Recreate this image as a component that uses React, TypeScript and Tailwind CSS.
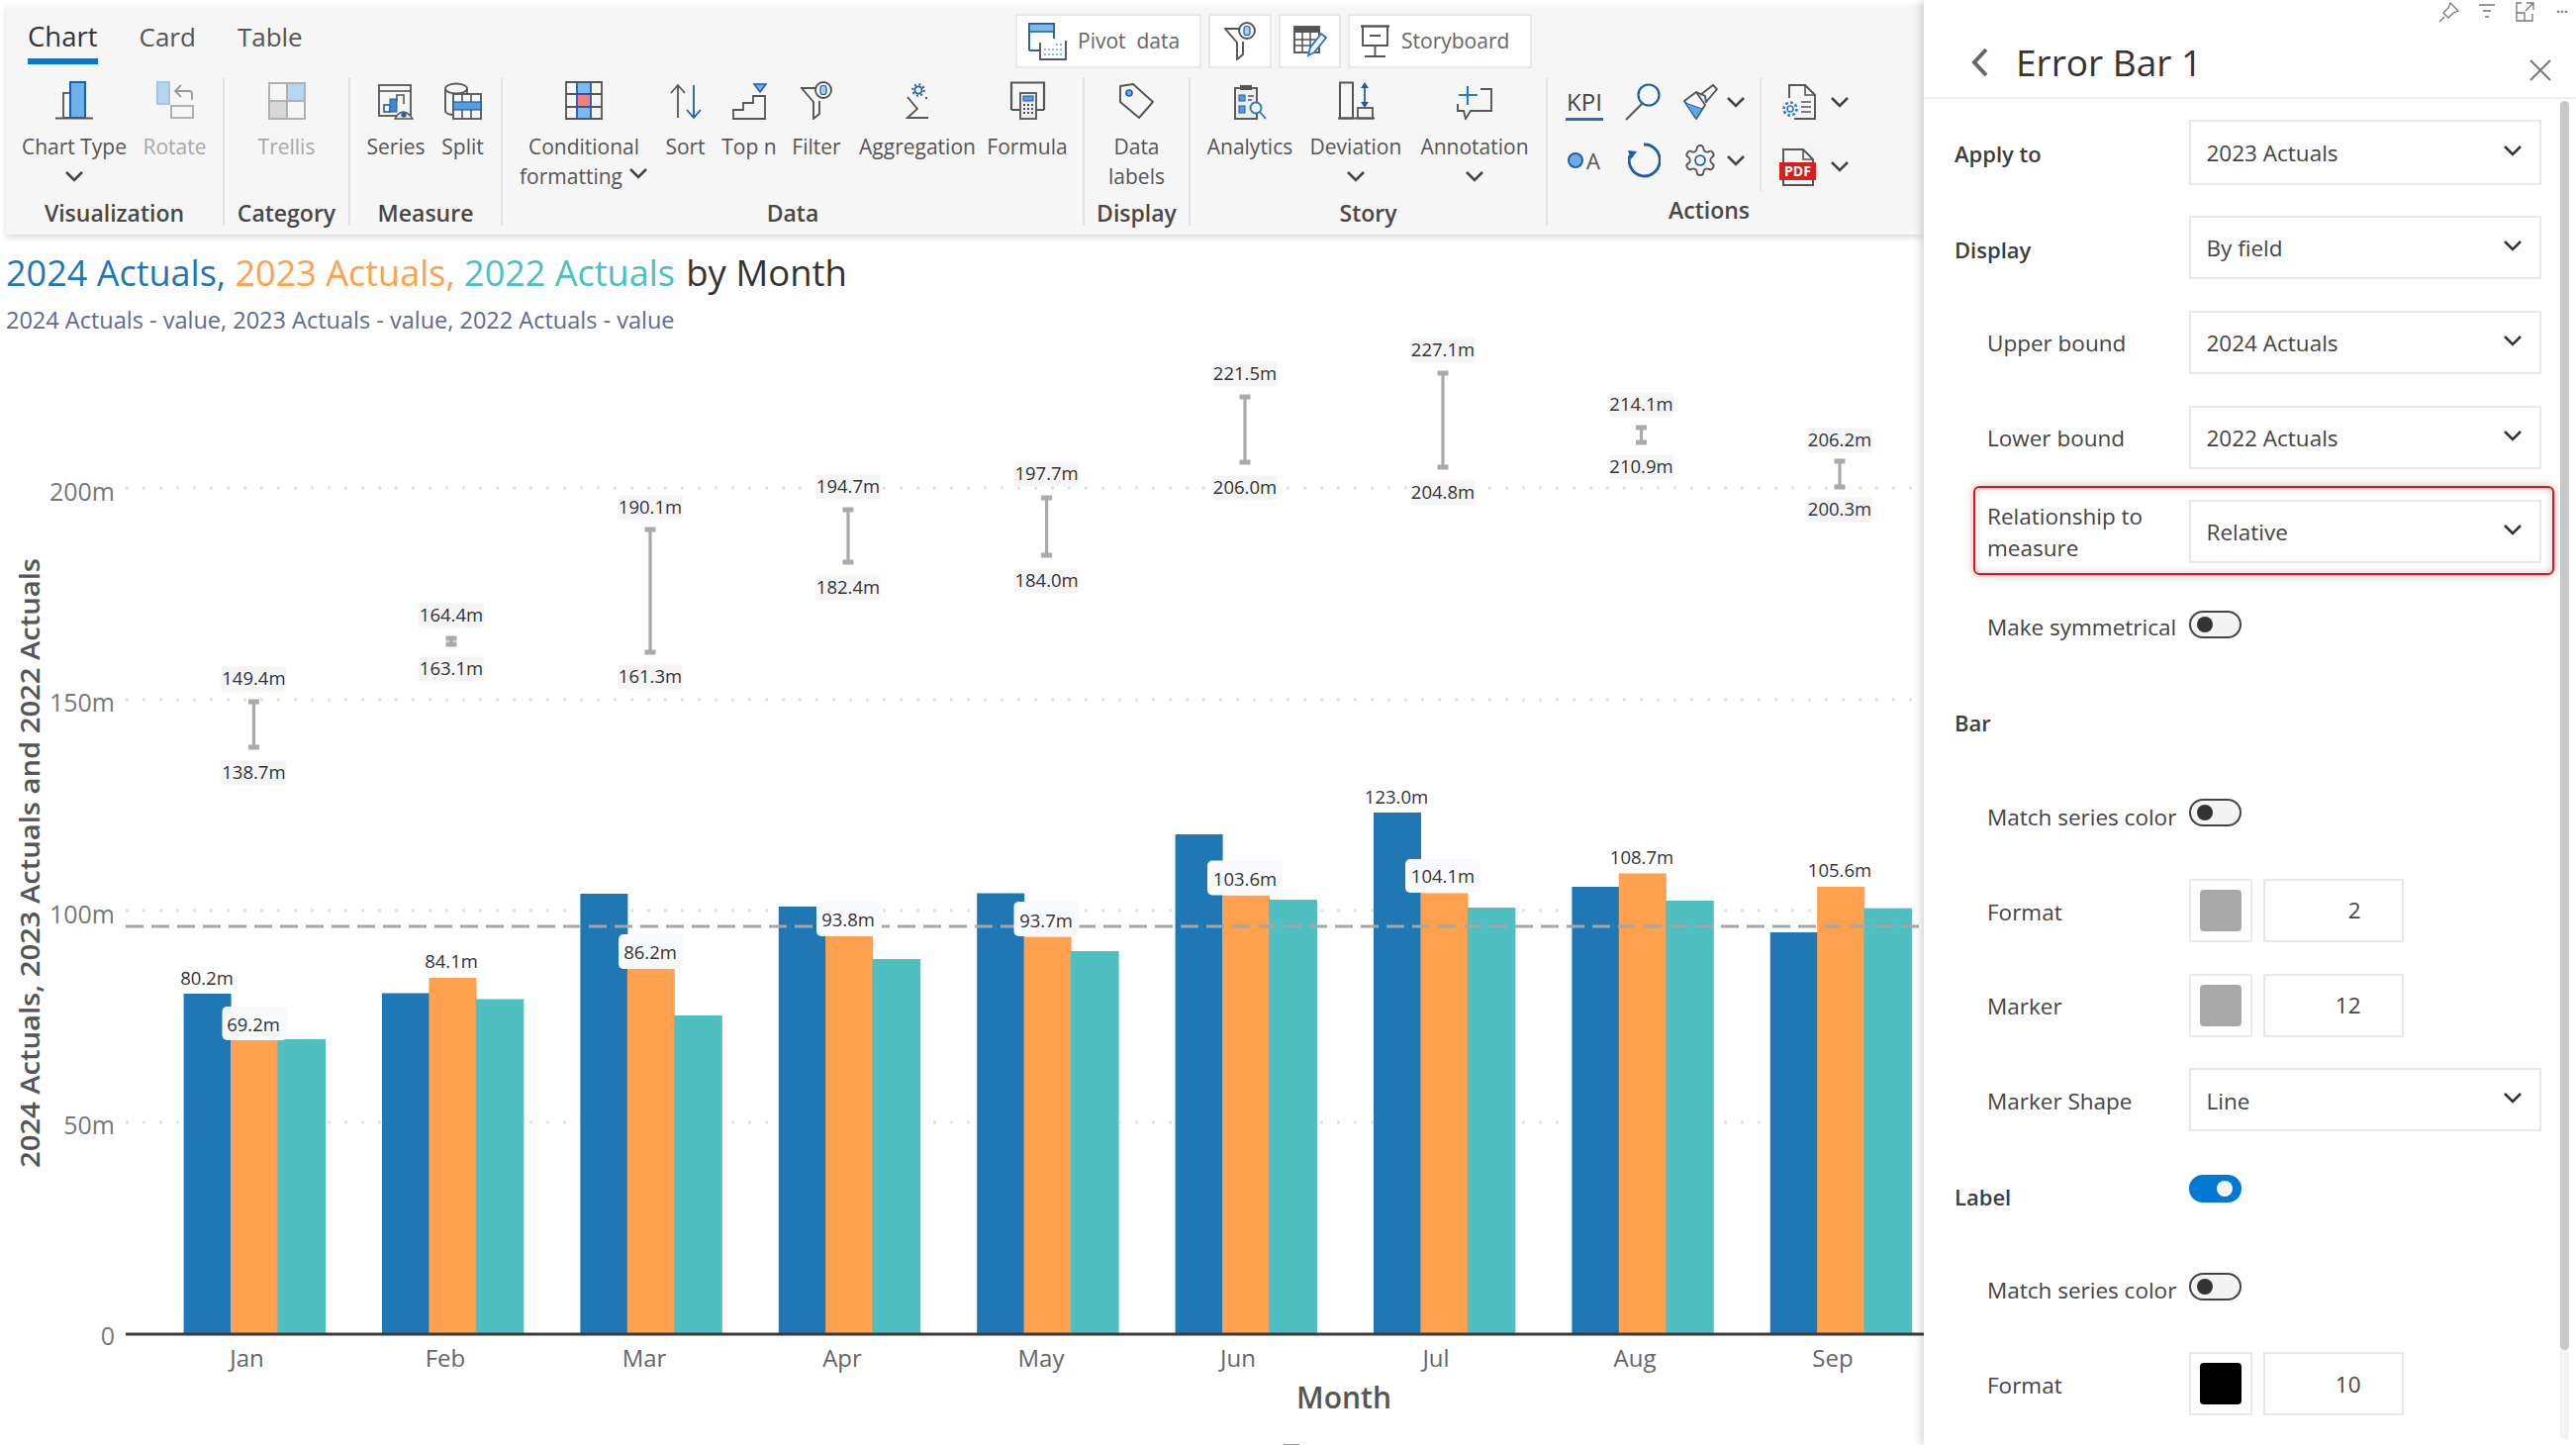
import React from "react";

const G = "#555";
const B = "#1b5faa";
const L = "#6db1ea";

const Chevron = ({ c = "#444", w = 20 }: { c?: string; w?: number }) => (
  <svg width={w} height={12} viewBox="0 0 20 12" fill="none" className="block shrink-0">
    <path d="M2 2 L10 10 L18 2" stroke={c} strokeWidth={2.6} />
  </svg>
);

const IconChartType = () => (
  <svg width={38} height={40} viewBox="0 0 38 40" fill="none">
    <rect x={8} y={13} width={7} height={25} stroke={G} strokeWidth={1.8} />
    <rect x={15} y={2} width={15} height={36} fill={L} stroke={B} strokeWidth={2} />
    <path d="M0 38.5 H38" stroke={G} strokeWidth={2} />
  </svg>
);
const IconRotate = () => (
  <svg width={38} height={40} viewBox="0 0 38 40" fill="none">
    <rect x={1} y={2} width={12} height={22} fill="#b5d4f2" stroke="#9cc3ea" strokeWidth={1.8} />
    <path d="M36 20 V14 Q36 11 33 11 H19 M25 5 L19 11 L25 17" stroke="#9a9a9a" strokeWidth={1.8} />
    <rect x={15} y={26} width={22} height={12} stroke="#aaa" strokeWidth={1.8} fill="#f6f6f6" />
  </svg>
);
const IconTrellis = () => (
  <svg width={38} height={38} viewBox="0 0 38 38" fill="none">
    <rect x={19} y={1} width={18} height={18} fill="#b7d6f3" />
    <rect x={1} y={19} width={18} height={18} fill="#d8d8d8" />
    <path d="M1 1 H37 V37 H1 Z M19 1 V37 M1 19 H37" stroke="#b0b0b0" strokeWidth={2} />
  </svg>
);
const IconSeries = () => (
  <svg width={36} height={36} viewBox="0 0 36 36" fill="none">
    <rect x={1} y={1} width={32} height={31} stroke={G} strokeWidth={1.8} />
    <path d="M1 7 H33" stroke={G} strokeWidth={1.6} />
    <rect x={6} y={21} width={6} height={7} stroke={B} strokeWidth={1.6} />
    <rect x={12} y={15} width={7} height={13} fill="#3f86d6" stroke={B} strokeWidth={1} />
    <path d="M19 17 V11 H26 V20" stroke={G} strokeWidth={1.6} />
    <path d="M17 35 Q25 21 35 35 Z" fill="#eee" stroke={G} strokeWidth={1.4} />
    <circle cx={26} cy={31} r={2.6} fill={B} />
  </svg>
);
const IconSplit = () => (
  <svg width={38} height={38} viewBox="0 0 38 38" fill="none">
    <path d="M1 7 V29 Q1 32 8 33" stroke={G} strokeWidth={1.8} />
    <ellipse cx={12} cy={6.5} rx={11} ry={5} stroke={G} strokeWidth={1.8} fill="#f6f6f6" />
    <path d="M23 7 V12" stroke={G} strokeWidth={1.8} />
    <rect x={9} y={12} width={28} height={25} fill="#f6f6f6" stroke={G} strokeWidth={1.8} />
    <path d="M18 12 V37 M27 12 V37" stroke={G} strokeWidth={1.6} />
    <rect x={9} y={20} width={28} height={8} fill="#5b9be0" stroke={B} strokeWidth={1.2} />
  </svg>
);
const IconCond = () => (
  <svg width={38} height={39} viewBox="0 0 38 39" fill="none">
    <rect x={12} y={1} width={14} height={12} fill="#7fb8ea" />
    <rect x={12} y={13} width={14} height={13} fill="#f47c7c" />
    <rect x={12} y={26} width={14} height={12} fill="#7fb8ea" />
    <path d="M1 1 H37 V38 H1 Z M1 13 H37 M1 26 H37" stroke={G} strokeWidth={1.8} />
    <path d="M12 1 V38 M26 1 V38 M12 13 H26 M12 26 H26" stroke={B} strokeWidth={1.8} />
  </svg>
);
const IconSort = () => (
  <svg width={32} height={37} viewBox="0 0 32 37" fill="none">
    <path d="M8 35 V2 M1 10 L8 2 L15 10" stroke={G} strokeWidth={1.8} />
    <path d="M24 2 V35 M17 27 L24 35 L31 27" stroke={B} strokeWidth={1.8} />
  </svg>
);
const IconTopN = () => (
  <svg width={35} height={37} viewBox="0 0 35 37" fill="none">
    <path d="M22 1 H34 L28 9 Z" fill={L} stroke={B} strokeWidth={1.5} />
    <path d="M1 36 V27 H11 V20 H21 V13 H33 V36 Z" stroke={G} strokeWidth={1.8} />
  </svg>
);
const IconFilter = ({ s = 1 }: { s?: number }) => (
  <svg width={32 * s} height={39 * s} viewBox="0 0 32 39" fill="none">
    <path d="M16 7 H1 L13 21 V38 L19 33 V20" stroke={G} strokeWidth={1.9} />
    <circle cx={23} cy={9} r={8} fill="#f6f6f6" stroke={G} strokeWidth={1.9} />
    <rect x={20} y={4.5} width={6} height={9} rx={2.5} fill="#a9cdf0" stroke={B} strokeWidth={1.2} />
  </svg>
);
const IconAgg = () => (
  <svg width={24} height={37} viewBox="0 0 24 37" fill="none">
    <circle cx={13} cy={7} r={3.6} stroke={B} strokeWidth={1.8} />
    <circle cx={13} cy={7} r={5.8} stroke={B} strokeWidth={2} strokeDasharray="2 2.5" />
    <path d="M22 15 H20 M2 14 L12 26 L2 35 H23" stroke={G} strokeWidth={1.8} />
  </svg>
);
const IconFormula = () => (
  <svg width={37} height={39} viewBox="0 0 37 39" fill="none">
    <path d="M2 29 V1.5 H35 V29" stroke={G} strokeWidth={2.2} />
    <path d="M2 29 H10 M27 29 H35" stroke={G} strokeWidth={2.2} />
    <rect x={11} y={12} width={16} height={26} fill="#eee" stroke={G} strokeWidth={1.8} />
    <rect x={14} y={15} width={10} height={5} fill="#5b9be0" stroke={B} strokeWidth={1} />
    <path d="M14 24 H24 M14 28 H24 M14 32 H24" stroke={G} strokeWidth={2} strokeDasharray="2 2" />
  </svg>
);
const IconTag = () => (
  <svg width={37} height={38} viewBox="0 0 37 38" fill="none">
    <path d="M2 4 L15 2 L35 20 L21 36 L2 20 Z" stroke={G} strokeWidth={1.9} strokeLinejoin="round" />
    <circle cx={11} cy={11} r={3} fill={L} stroke={B} strokeWidth={1.6} />
  </svg>
);
const IconAnalytics = () => (
  <svg width={33} height={36} viewBox="0 0 33 36" fill="none">
    <rect x={1} y={4} width={22} height={31} fill="#eee" stroke={G} strokeWidth={1.9} />
    <rect x={6} y={1} width={12} height={5} fill={G} />
    <rect x={5} y={11} width={6} height={6} fill="#5b9be0" stroke={B} />
    <rect x={5} y={22} width={6} height={7} fill="#5b9be0" stroke={B} />
    <path d="M14 12 H20 M14 16 H18" stroke={G} strokeWidth={1.6} />
    <circle cx={22} cy={24} r={5.5} fill="#f6f6f6" stroke="#2b78c8" strokeWidth={1.9} />
    <path d="M26 28 L32 35" stroke="#2b78c8" strokeWidth={1.9} />
  </svg>
);
const IconDeviation = () => (
  <svg width={37} height={39} viewBox="0 0 37 39" fill="none">
    <rect x={2} y={1.5} width={13} height={36} stroke={G} strokeWidth={2} />
    <rect x={20} y={27} width={15} height={10.5} stroke={G} strokeWidth={1.8} />
    <path d="M0 37.5 H37" stroke={G} strokeWidth={2} />
    <path d="M27 5 V24" stroke={B} strokeWidth={1.8} />
    <path d="M27 1 L31 7 H23 Z M27 27 L31 21 H23 Z" fill={B} />
  </svg>
);
const IconAnnotation = () => (
  <svg width={37} height={37} viewBox="0 0 37 37" fill="none">
    <path d="M11 3 V22 M2 12 H21" stroke="#2b78c8" strokeWidth={2.2} />
    <path d="M24 6 H35 V28 H14 L9 36 L7 28 H1 V21" stroke={G} strokeWidth={1.9} />
  </svg>
);
const IconMag = () => (
  <svg width={36} height={38} viewBox="0 0 36 38" fill="none">
    <circle cx={24} cy={12} r={10.5} stroke={B} strokeWidth={2.2} />
    <path d="M17 21 L1 37" stroke={G} strokeWidth={2} />
  </svg>
);
const IconBrush = () => (
  <svg width={36} height={36} viewBox="0 0 36 36" fill="none">
    <path d="M2 17 L14 35 L23 21 L14 8 Z" fill="#f6f6f6" stroke={G} strokeWidth={1.9} strokeLinejoin="round" />
    <path d="M3 19 L14 35 L20 25 Z" fill="#5ca9e8" stroke={B} strokeWidth={1} />
    <path d="M14 8 L23 12 L24 19 M18 11 L31 1 L35 5 L24 18" stroke={G} strokeWidth={1.9} />
  </svg>
);
const IconRefresh = () => (
  <svg width={33} height={37} viewBox="0 0 33 37" fill="none">
    <path d="M16 2 A15.5 16 0 1 1 2 13" stroke={B} strokeWidth={2.8} />
    <path d="M0 8 L9 9 L3 17 Z" fill={B} />
  </svg>
);
const IconGear = ({ size = 36, inner = B }: { size?: number; inner?: string }) => (
  <svg width={size} height={size} viewBox="0 0 24 24" fill="none">
    <path
      d="M12.22 2h-.44a2 2 0 0 0-2 2v.18a2 2 0 0 1-1 1.73l-.43.25a2 2 0 0 1-2 0l-.15-.08a2 2 0 0 0-2.73.73l-.22.38a2 2 0 0 0 .73 2.73l.15.1a2 2 0 0 1 1 1.72v.51a2 2 0 0 1-1 1.74l-.15.09a2 2 0 0 0-.73 2.73l.22.38a2 2 0 0 0 2.73.73l.15-.08a2 2 0 0 1 2 0l.43.25a2 2 0 0 1 1 1.73V20a2 2 0 0 0 2 2h.44a2 2 0 0 0 2-2v-.18a2 2 0 0 1 1-1.73l.43-.25a2 2 0 0 1 2 0l.15.08a2 2 0 0 0 2.73-.73l.22-.39a2 2 0 0 0-.73-2.73l-.15-.08a2 2 0 0 1-1-1.74v-.5a2 2 0 0 1 1-1.74l.15-.09a2 2 0 0 0 .73-2.73l-.22-.38a2 2 0 0 0-2.73-.73l-.15.08a2 2 0 0 1-2 0l-.43-.25a2 2 0 0 1-1-1.73V4a2 2 0 0 0-2-2z"
      stroke={G}
      strokeWidth={1.2}
    />
    <circle cx={12} cy={12} r={3.3} stroke={inner} strokeWidth={1.2} />
  </svg>
);
const IconDocGear = () => (
  <svg width={36} height={36} viewBox="0 0 36 36" fill="none">
    <path d="M8 14 V1 H24 L34 11 V35 H13" stroke={G} strokeWidth={1.9} />
    <path d="M24 1 V11 H34" stroke={G} strokeWidth={1.6} />
    <path d="M20 18 H30 M20 23 H30 M20 28 H30" stroke={G} strokeWidth={1.6} />
    <circle cx={9} cy={25} r={3} stroke="#2b78c8" strokeWidth={1.6} />
    <circle cx={9} cy={25} r={6.5} stroke="#2b78c8" strokeWidth={2.6} strokeDasharray="2.6 2.4" />
  </svg>
);
const IconPdf = () => (
  <svg width={38} height={38} viewBox="0 0 38 38" fill="none">
    <path d="M4 14 V1 H24 L34 11 V14" stroke={G} strokeWidth={1.9} />
    <path d="M24 1 V11 H34" stroke={G} strokeWidth={1.6} />
    <rect x={0} y={14} width={37} height={18} fill="#d3211d" />
    <text x={18.5} y={28} textAnchor="middle" fontSize={14} fontWeight={700} fill="#fff">PDF</text>
    <path d="M4 32 V37 H34 V32" stroke={G} strokeWidth={2} />
  </svg>
);
const IconPivot = () => (
  <svg width={39} height={38} viewBox="0 0 39 38" fill="none">
    <path d="M1 28 V1 H26 V16" stroke={B} strokeWidth={1.9} />
    <rect x={1} y={1} width={25} height={8} fill="#7fb8ea" stroke={B} strokeWidth={1.5} />
    <path d="M1 28 H12" stroke={B} strokeWidth={1.9} />
    <path d="M12 20 V37 H38 V18" stroke={G} strokeWidth={1.9} />
    <path d="M16 32 H36 M16 27 H36 M28 22 H36" stroke="#7fb8ea" strokeWidth={2.2} strokeDasharray="2 2" />
  </svg>
);
const IconTablePen = () => (
  <svg width={34} height={32} viewBox="0 0 34 32" fill="none">
    <rect x={1} y={1} width={25} height={26} stroke={G} strokeWidth={1.9} />
    <rect x={1} y={1} width={25} height={6} fill={G} />
    <path d="M1 14 H24 M1 20 H18 M9 7 V27 M17 7 V24" stroke={G} strokeWidth={1.5} />
    <path d="M15 30 L17 22 L28 8 L33 12 L21 27 Z" fill="#f6f6f6" stroke="#2b78c8" strokeWidth={1.9} />
  </svg>
);
const IconBoard = () => (
  <svg width={31} height={33} viewBox="0 0 31 33" fill="none">
    <path d="M1 1.5 H30" stroke={G} strokeWidth={2.4} />
    <path d="M3 2 V21 H28 V2" stroke={G} strokeWidth={1.9} />
    <path d="M10 11 H21" stroke={G} strokeWidth={2} />
    <path d="M15.5 21 V32 M5 32 H26" stroke={G} strokeWidth={1.9} />
  </svg>
);

function Item({
  w,
  label,
  line2,
  icon,
  muted,
  chevron,
}: {
  w: string;
  label: string;
  line2?: string;
  icon: React.ReactNode;
  muted?: boolean;
  chevron?: boolean;
}) {
  return (
    <div className={`${w} flex shrink-0 flex-col items-center`}>
      <div className="flex h-[42px] items-end justify-center">{icon}</div>
      <div className={`mt-[12px] whitespace-nowrap text-[21px] leading-[30px] ${muted ? "text-[#a8a8a8]" : "text-[#555]"}`}>
        {label}
      </div>
      {line2 && <div className="whitespace-nowrap text-[21px] leading-[30px] text-[#555]">{line2}</div>}
      {chevron && (
        <div className="flex h-[30px] items-center">
          <Chevron />
        </div>
      )}
    </div>
  );
}

function Group({ cls, pad = "", label, children }: { cls: string; pad?: string; label: string; children: React.ReactNode }) {
  return (
    <div className={`${cls} flex h-[149px] shrink-0 flex-col border-r-2 border-[#e2e2e2]`}>
      <div className={`${pad} flex h-[122px] items-start`}>{children}</div>
      <div className="h-[27px] whitespace-nowrap text-center text-[23px] font-semibold leading-[28px] text-[#484848]">{label}</div>
    </div>
  );
}

const TopBtn = ({ w, children }: { w: string; children: React.ReactNode }) => (
  <div className={`${w} flex h-[55px] shrink-0 items-center border-2 border-[#e8e8e8] bg-white`}>{children}</div>
);

function Ribbon() {
  return (
    <div className="ml-[6px] h-[232px] w-[1938px] bg-[#f6f6f6] shadow-[0_3px_6px_rgba(0,0,0,0.14)]">
      <div className="flex h-[74px]">
        <div className="flex w-[1020px] shrink-0 gap-[42px] pl-[22px] pt-[13px] leading-[38px] text-[#555]">
          <div className="flex flex-col">
            <span className="text-[27.5px] text-[#333]">Chart</span>
            <span className="mt-[3px] h-[6px] bg-[#0078d4]" />
          </div>
          <span className="text-[26px]">Card</span>
          <span className="text-[26px]">Table</span>
        </div>
        <div className="flex gap-[7px] pt-[9px]">
          <TopBtn w="w-[188px]">
            <div className="ml-[11px]"><IconPivot /></div>
            <span className="ml-[11px] whitespace-nowrap text-[21px] text-[#666]">Pivot&nbsp; data</span>
          </TopBtn>
          <TopBtn w="w-[64px] justify-center"><IconFilter /></TopBtn>
          <TopBtn w="w-[63px] justify-center"><IconTablePen /></TopBtn>
          <TopBtn w="w-[186px]">
            <div className="ml-[10px]"><IconBoard /></div>
            <span className="ml-[11px] whitespace-nowrap text-[21px] text-[#666]">Storyboard</span>
          </TopBtn>
        </div>
      </div>
      <div className="flex">
        <Group cls="w-[221px]" pad="pl-[16px]" label="Visualization">
          <Item w="w-[106px]" label="Chart Type" icon={<IconChartType />} chevron />
          <Item w="w-[97px]" label="Rotate" icon={<IconRotate />} muted />
        </Group>
        <Group cls="w-[127px]" label="Category">
          <Item w="w-[125px]" label="Trellis" icon={<IconTrellis />} muted />
        </Group>
        <Group cls="w-[154px]" pad="pl-[6px]" label="Measure">
          <Item w="w-[80px]" label="Series" icon={<IconSeries />} />
          <Item w="w-[55px]" label="Split" icon={<IconSplit />} />
        </Group>
        <Group cls="w-[588px]" pad="pl-[12px]" label="Data">
          <div className="flex w-[140px] shrink-0 flex-col items-center">
            <div className="flex h-[42px] items-end justify-center"><IconCond /></div>
            <div className="mt-[12px] whitespace-nowrap text-[21px] leading-[30px] text-[#555]">Conditional</div>
            <div className="flex items-center gap-[6px] text-[21px] leading-[30px] text-[#555]">
              <span>formatting</span>
              <div className="-mt-[6px]"><Chevron /></div>
            </div>
          </div>
          <Item w="w-[65px]" label="Sort" icon={<IconSort />} />
          <Item w="w-[64px]" label="Top n" icon={<IconTopN />} />
          <Item w="w-[72px]" label="Filter" icon={<IconFilter />} />
          <Item w="w-[132px]" label="Aggregation" icon={<IconAgg />} />
          <Item w="w-[90px]" label="Formula" icon={<IconFormula />} />
        </Group>
        <Group cls="w-[107px]" label="Display">
          <Item w="w-[105px]" label="Data" line2="labels" icon={<IconTag />} />
        </Group>
        <Group cls="w-[361px]" pad="pl-[10px]" label="Story">
          <Item w="w-[100px]" label="Analytics" icon={<IconAnalytics />} />
          <Item w="w-[114px]" label="Deviation" icon={<IconDeviation />} chevron />
          <Item w="w-[126px]" label="Annotation" icon={<IconAnnotation />} chevron />
        </Group>
        <div className="flex h-[149px] w-[326px] shrink-0 flex-col">
          <div className="flex h-[114px]">
            <div className="grid h-[114px] w-[216px] shrink-0 grid-cols-[78px_58px_80px] grid-rows-[48px_70px] items-center border-r-2 border-[#e2e2e2]">
              <div className="ml-[18px] flex w-[38px] flex-col items-center pt-[2px]">
                <span className="text-[24px] font-medium leading-[32px] text-[#444]">KPI</span>
                <span className="h-[3px] w-[38px] bg-[#2b6cb8]" />
              </div>
              <div><IconMag /></div>
              <div className="flex items-center gap-[8px]">
                <IconBrush />
                <Chevron />
              </div>
              <div className="ml-[20px] flex items-center gap-[3px]">
                <span className="block h-[16px] w-[16px] rounded-full border-2 border-[#1b5faa] bg-[#6cabe6]" />
                <span className="text-[22px] font-medium leading-[28px] text-[#555]">A</span>
              </div>
              <div className="ml-[3px]"><IconRefresh /></div>
              <div className="flex items-center gap-[8px]">
                <IconGear />
                <Chevron />
              </div>
            </div>
            <div className="flex flex-col">
              <div className="ml-[20px] mt-[6px] flex h-[36px] items-start gap-[13px]">
                <IconDocGear />
                <div className="mt-[12px]"><Chevron /></div>
              </div>
              <div className="ml-[18px] mt-[29px] flex h-[38px] items-start gap-[13px]">
                <IconPdf />
                <div className="mt-[12px]"><Chevron /></div>
              </div>
            </div>
          </div>
          <div className="mt-[5px] text-center text-[23px] font-semibold leading-[28px] text-[#484848]">Actions</div>
        </div>
      </div>
    </div>
  );
}

const MONTHS = [
  { n: "Jan", tx: 249.5, x: 185.6, t: [1003, 1050, 1049] },
  { n: "Feb", tx: 450, x: 386, t: [1002.5, 987, 1008.5] },
  { n: "Mar", tx: 651, x: 586.4, t: [902, 978, 1025] },
  { n: "Apr", tx: 851, x: 786.8, t: [915, 945, 968] },
  { n: "May", tx: 1052, x: 987.2, t: [901.5, 945.6, 960] },
  { n: "Jun", tx: 1251, x: 1187.6, t: [842, 903.6, 908] },
  { n: "Jul", tx: 1451, x: 1388, t: [820, 901.4, 916] },
  { n: "Aug", tx: 1652, x: 1588.4, t: [895, 881.5, 909] },
  { n: "Sep", tx: 1852, x: 1788.8, t: [941, 895, 916.6] },
];
const COLORS = ["#1f77b4", "#ffa14e", "#4fbfc2"];

const ERR = [
  { x: 256.4, a: 708, b: 754, u: "149.4m", uy: 685, l: "138.7m", ly: 780 },
  { x: 456, a: 644, b: 650, u: "164.4m", uy: 621, l: "163.1m", ly: 675 },
  { x: 657, a: 534, b: 658, u: "190.1m", uy: 512, l: "161.3m", ly: 683 },
  { x: 857, a: 514, b: 567, u: "194.7m", uy: 491, l: "182.4m", ly: 593 },
  { x: 1057.6, a: 502, b: 560, u: "197.7m", uy: 478, l: "184.0m", ly: 586 },
  { x: 1258, a: 400, b: 466, u: "221.5m", uy: 377, l: "206.0m", ly: 492 },
  { x: 1458, a: 376, b: 471, u: "227.1m", uy: 353, l: "204.8m", ly: 497 },
  { x: 1658.5, a: 431, b: 446, u: "214.1m", uy: 408, l: "210.9m", ly: 471 },
  { x: 1859, a: 465, b: 491, u: "206.2m", uy: 444, l: "200.3m", ly: 514 },
];

const BAR_LABELS: { t: string; x: number; y: number; r?: [number, number, number, number] }[] = [
  { t: "80.2m", x: 209, y: 988 },
  { t: "69.2m", x: 256, y: 1035, r: [224.5, 1016, 66, 34] },
  { t: "84.1m", x: 456, y: 971 },
  { t: "86.2m", x: 657, y: 962, r: [625, 943, 66, 35] },
  { t: "93.8m", x: 857, y: 929, r: [825, 910, 66, 35] },
  { t: "93.7m", x: 1057, y: 930, r: [1024.5, 910, 66, 35] },
  { t: "103.6m", x: 1258, y: 888, r: [1220, 868.5, 76, 35] },
  { t: "104.1m", x: 1458, y: 885, r: [1420, 867, 76, 34] },
  { t: "123.0m", x: 1411, y: 805 },
  { t: "108.7m", x: 1659, y: 866 },
  { t: "105.6m", x: 1859, y: 879 },
];

function Chart() {
  const gridY = [492, 706, 919, 1133];
  const ticks: [string, number][] = [
    ["200m", 494.5],
    ["150m", 707.5],
    ["100m", 921.5],
    ["50m", 1134.5],
    ["0", 1347.5],
  ];
  return (
    <svg width={1944} height={1120} viewBox="0 340 1944 1120" className="block">
      {gridY.map((y) => (
        <line key={y} x1={127} x2={1944} y1={y} y2={y} stroke="#e2e2e2" strokeWidth={3} strokeDasharray="3 14" />
      ))}
      {MONTHS.map((m) =>
        m.t.map((top, i) => (
          <rect key={m.n + i} x={m.x + i * 47.4} y={top} width={i === 2 ? 48.6 : 48} height={1347 - top} fill={COLORS[i]} />
        )),
      )}
      <line x1={127} x2={1944} y1={935} y2={935} stroke="#a6a6a6" strokeWidth={3} strokeDasharray="18 8" />
      <line x1={127} x2={1944} y1={1347} y2={1347} stroke="#3a3a3a" strokeWidth={3} />
      {ticks.map(([t, y]) => (
        <text key={t} x={116} y={y} textAnchor="end" dominantBaseline="central" fontSize={25} fill="#777">{t}</text>
      ))}
      {MONTHS.map((m) => (
        <text key={m.n} x={m.tx} y={1370.5} textAnchor="middle" dominantBaseline="central" fontSize={24} fill="#666">{m.n}</text>
      ))}
      {BAR_LABELS.map((l) => (
        <g key={l.t}>
          {l.r && <rect x={l.r[0]} y={l.r[1]} width={l.r[2]} height={l.r[3]} rx={5} fill="#f8fafd" />}
          <text x={l.x} y={l.y - 1.5} textAnchor="middle" dominantBaseline="central" fontSize={18.5} fill="#333">{l.t}</text>
        </g>
      ))}
      {ERR.map((e) => (
        <g key={e.u}>
          <line x1={e.x} x2={e.x} y1={e.a} y2={e.b} stroke="#aaa" strokeWidth={3.2} />
          <rect x={e.x - 5.5} y={e.a - 2.5} width={11} height={5} fill="#aaa" />
          <rect x={e.x - 5.5} y={e.b - 2.5} width={11} height={5} fill="#aaa" />
          <rect x={e.x - 33} y={e.uy - 12.5} width={66} height={25} rx={4} fill="#f5f5f5" />
          <rect x={e.x - 33} y={e.ly - 12.5} width={66} height={25} rx={4} fill="#f5f5f5" />
          <text x={e.x} y={e.uy - 1.5} textAnchor="middle" dominantBaseline="central" fontSize={18.5} fill="#333">{e.u}</text>
          <text x={e.x} y={e.ly - 1.5} textAnchor="middle" dominantBaseline="central" fontSize={18.5} fill="#333">{e.l}</text>
        </g>
      ))}
      <text
        transform="translate(29 871) rotate(-90)"
        textAnchor="middle"
        dominantBaseline="central"
        fontSize={27}
        fontWeight={600}
        fill="#555"
        textLength={616}
        lengthAdjust="spacingAndGlyphs"
      >
        2024 Actuals, 2023 Actuals and 2022 Actuals
      </text>
      <text x={1358} y={1410.5} textAnchor="middle" dominantBaseline="central" fontSize={30} fontWeight={600} fill="#555">Month</text>
      <rect x={1297} y={1458} width={16} height={2} fill="#999" />
    </svg>
  );
}

const Toggle = ({ on, mt }: { on?: boolean; mt: string }) => (
  <div
    className={`${mt} flex h-[28px] w-[53px] shrink-0 items-center self-start rounded-full border-2 ${
      on ? "justify-end border-[#0078d4] bg-[#0078d4] pr-[7px]" : "border-[#444] bg-[#f4f4f4] pl-[6px]"
    }`}
  >
    <span className={`block h-[16px] w-[16px] rounded-full ${on ? "bg-[#f4f4f4]" : "bg-[#333]"}`} />
  </div>
);

const Select = ({ v, h = "h-[64px]" }: { v: string; h?: string }) => (
  <div className={`${h} flex w-[356px] shrink-0 items-center justify-between border-2 border-[#e8e8e8] bg-white pl-[16px] pr-[17px]`}>
    <span className="pt-[2px] text-[22.5px] text-[#444]">{v}</span>
    <div className="-mt-[4px]"><Chevron c="#333" /></div>
  </div>
);

const Swatch = ({ c, v }: { c: string; v: string }) => (
  <div className="flex gap-[11px]">
    <div className="flex h-[64px] w-[64px] shrink-0 items-center justify-center border-2 border-[#e8e8e8] bg-white">
      <span className={`${c} block h-[42px] w-[42px] rounded-[4px]`} />
    </div>
    <div className="flex h-[64px] w-[142px] shrink-0 items-center justify-end border-2 border-[#e8e8e8] bg-white pr-[41px] text-[22.5px] text-[#444]">
      {v}
    </div>
  </div>
);

function Row({ label, bold, children, h = "h-[64px]" }: { label: React.ReactNode; bold?: boolean; children?: React.ReactNode; h?: string }) {
  return (
    <div className={`${h} relative flex shrink-0 items-center`}>
      <div
        className={`w-[267.5px] shrink-0 whitespace-nowrap pt-[3px] leading-[32px] ${
          bold ? "pl-[31px] text-[22px] font-semibold text-[#3d3d3d]" : "pl-[64px] text-[22.5px] text-[#444]"
        }`}
      >
        {label}
      </div>
      {children}
    </div>
  );
}

function Panel() {
  return (
    <div className="relative z-10 h-[1460px] w-[659px] shrink-0 overflow-hidden bg-white shadow-[-3px_0_8px_rgba(0,0,0,0.16)]">
      <div className="h-[100px] border-b-2 border-[#eee]">
        <div className="flex h-[24px] items-center justify-end gap-[16px] pr-[3px]">
          <svg width={22} height={22} viewBox="0 0 22 22" fill="none">
            <path d="M12 2 L20 10 L15 12 L10 17 L5 12 L10 7 Z M6 16 L1 21" stroke="#777" strokeWidth={1.3} />
          </svg>
          <svg width={22} height={18} viewBox="0 0 22 18" fill="none">
            <path d="M3 2 H19 M7 8 H15 M9 14 H13" stroke="#777" strokeWidth={1.6} />
          </svg>
          <svg width={22} height={22} viewBox="0 0 22 22" fill="none">
            <path d="M8 2 H3 V20 H19 V13 M3 12 H11 V20 M13 2 H20 V9 M20 2 L12 10" stroke="#777" strokeWidth={1.3} />
          </svg>
          <span className="block w-[22px] text-center text-[14px] font-bold leading-[14px] text-[#777]">···</span>
        </div>
        <div className="flex h-[74px] items-start">
          <svg width={20} height={32} viewBox="0 0 20 32" fill="none" className="ml-[47px] mt-[23px] shrink-0">
            <path d="M16 3 L4 16 L16 29" stroke="#666" strokeWidth={4} />
          </svg>
          <span className="ml-[26px] mt-[14px] whitespace-nowrap text-[37px] leading-[50px] text-[#333]">Error Bar 1</span>
          <svg width={24} height={24} viewBox="0 0 24 24" fill="none" className="ml-[330px] mt-[35px] shrink-0">
            <path d="M2 2 L22 22 M22 2 L2 22" stroke="#777" strokeWidth={2} />
          </svg>
        </div>
      </div>
      <div className="flex flex-col gap-[31.7px] pt-[20.5px]">
        <Row label="Apply to" bold h="h-[66px]"><Select v="2023 Actuals" h="h-[66px]" /></Row>
        <Row label="Display" bold><Select v="By field" /></Row>
        <Row label="Upper bound"><Select v="2024 Actuals" /></Row>
        <Row label="Lower bound"><Select v="2022 Actuals" /></Row>
        <Row
          label={
            <span className="-mt-[1px] block">
              Relationship to
              <br />
              measure
            </span>
          }
        >
          <Select v="Relative" />
          <div className="pointer-events-none absolute left-[50px] top-[-14px] h-[90px] w-[587px] rounded-[6px] border-2 border-[#e8101a] shadow-[0_0_8px_rgba(0,0,0,0.25),inset_0_0_8px_rgba(0,0,0,0.2)]" />
        </Row>
        <Row label="Make symmetrical"><Toggle mt="mt-[16px]" /></Row>
        <Row label="Bar" bold />
        <Row label="Match series color"><Toggle mt="mt-[15px]" /></Row>
        <Row label="Format"><Swatch c="bg-[#a9a9a9]" v="2" /></Row>
        <Row label="Marker"><Swatch c="bg-[#a9a9a9]" v="12" /></Row>
        <Row label="Marker Shape"><Select v="Line" /></Row>
        <Row label="Label" bold><Toggle on mt="mt-[12px]" /></Row>
        <Row label="Match series color"><Toggle mt="mt-[15px]" /></Row>
        <Row label="Format"><Swatch c="bg-black" v="10" /></Row>
      </div>
      <div className="absolute left-[643px] top-[102px] h-[1353px] w-[9px] rounded-full bg-[#f3f3f3]" />
      <div className="absolute left-[643px] top-[102px] h-[1262px] w-[9px] rounded-full bg-[#c8c8c8]" />
    </div>
  );
}

export default function App() {
  return (
    <div className="flex h-[1460px] w-[2603px] overflow-hidden bg-white font-['Open_Sans',sans-serif]">
      <div className="w-[1944px] shrink-0 pt-[5px]">
        <Ribbon />
        <div className="ml-[6px] mt-[15px] whitespace-nowrap text-[36px] leading-[46px]">
          <span className="text-[#1f77b4]">2024 Actuals, </span>
          <span className="text-[#ffa14e]">2023 Actuals, </span>
          <span className="text-[#4dbfc0]">2022 Actuals </span>
          <span className="ml-[2px] text-[36.5px] text-[#333]">by Month</span>
        </div>
        <div className="ml-[6px] mt-[7px] h-[35px] whitespace-nowrap text-[23.5px] leading-[34px] text-[#5d6a92]">
          2024 Actuals - value, 2023 Actuals - value, 2022 Actuals - value
        </div>
        <Chart />
      </div>
      <Panel />
    </div>
  );
}
